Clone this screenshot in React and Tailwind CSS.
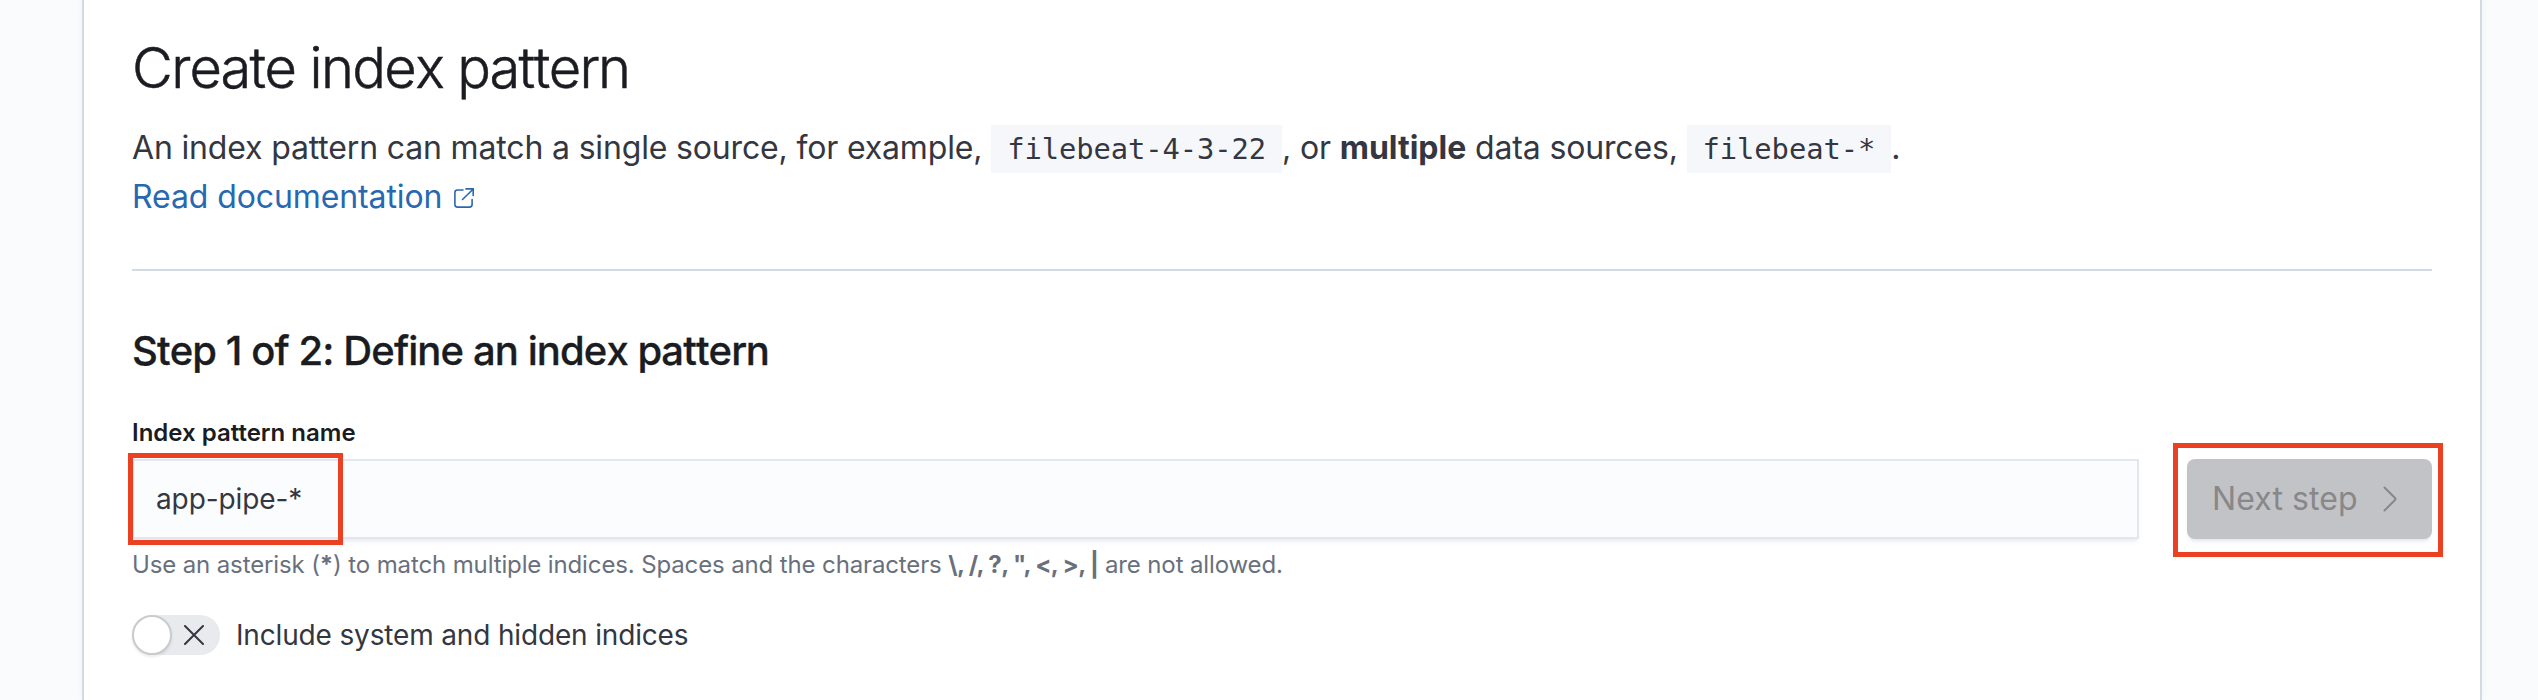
function Code({ children }) {
  return (
    <code className="bg-[#f5f7fa] px-4 pt-[7px] pb-[7px] font-['DejaVu_Sans_Mono',monospace] text-[28.8px] leading-none tracking-[-0.08px]">
      {children}
    </code>
  );
}

function Highlight({ className }) {
  return <div className={`pointer-events-none absolute border-[5px] border-[#ec4023] ${className}`} />;
}

function ExternalIcon() {
  return (
    <svg viewBox="0 0 20 20" className="ml-3 inline-block h-5 w-5 align-baseline" fill="none" stroke="currentColor" strokeWidth="1.6" strokeLinecap="round">
      <path d="M9 2H3.500Q0.900 2 0.900 4.500V16.500Q0.900 19.100 3.500 19.100H15.500Q18.100 19.100 18.100 16.500V11.500" />
      <path d="M12 0.900H19.200V7.500M19 1.200L8.500 11.500" />
    </svg>
  );
}

export default function App() {
  return (
    <div className="flex h-[700px] w-full overflow-hidden bg-[#fafbfd] pl-[82px] font-['Inter','Liberation_Sans',sans-serif] text-[#343741]">
      <main className="h-full w-[2400px] border-x-2 border-[#d3dae6] bg-white px-12 shadow-[0_0_8px_rgba(0,0,0,0.04)]">
        <h1 className="pt-9 text-[56px] leading-[64px] font-light tracking-[-1.64px] text-[#1a1c21] [-webkit-text-stroke:0.5px_#1a1c21] [font-kerning:none]">
          Create index pattern
        </h1>
        <div className="pt-6 text-[32px] leading-[48px] tracking-[-0.005em]">
          <p className="whitespace-nowrap">
            An index pattern can match a single source, for example, <Code>filebeat-4-3-22</Code>, or{" "}
            <strong className="font-bold tracking-[0px]">multiple</strong> data sources, <Code>filebeat-*</Code>.
          </p>
          <a className="block pt-px text-[#2868b0]">
            <span className="tracking-[-0.1px]">Read documentation</span>
            <ExternalIcon />
          </a>
        </div>
        <hr className="mt-12 border-t-2 border-[#d3dae6]" />
        <h2 className="pt-14 text-[40px] leading-[48px] font-medium tracking-[-0.9px] text-[#1a1c21] [-webkit-text-stroke:0.3px_#1a1c21] [font-kerning:none]">
          Step 1 of 2: Define an index pattern
        </h2>
        <div className="flex gap-12 pt-10">
          <div className="flex-1">
            <label className="block text-[24px] leading-9 font-semibold text-[#1a1c21]">Index pattern name</label>
            <div className="relative mt-2 flex h-20 items-center border-2 border-[#e3e6ef] bg-[#fbfcfd] px-[22px] text-[28px] tracking-[-0.1px] shadow-[0_4px_4px_-2px_rgba(152,162,179,0.25)]">
              app-pipe-*
              <Highlight className="top-[-8px] left-[-6px] h-[92px] w-[215px]" />
            </div>
            <p className="pt-2 text-[24px] leading-9 tracking-[-0.13px] text-[#69707d]">
              Use an asterisk (<strong>*</strong>) to match multiple indices. Spaces and the characters{" "}
              <strong className="tracking-[-0.6px]">\, /, ?, ", &lt;, &gt;, |</strong> are not allowed.
            </p>
            <div className="flex items-center gap-4 pt-8">
              <span className="flex h-10 w-[88px] items-center rounded-full bg-[#e9eaee]">
                <span className="h-10 w-10 rounded-full border-2 border-[#c9cbcd] bg-white shadow-[0_2px_3px_rgba(0,0,0,0.08)]" />
                <svg viewBox="0 0 20 20" className="ml-3 h-5 w-5" fill="none" stroke="#343741" strokeWidth="2" strokeLinecap="round">
                  <path d="M1 1L19 19M19 1L1 19" />
                </svg>
              </span>
              <span className="text-[28px] leading-10 tracking-[-0.16px]">Include system and hidden indices</span>
            </div>
          </div>
          <div className="pt-11">
            <button className="relative flex h-20 w-[245px] items-center rounded-lg bg-[#c2c3c6] pl-[25px] text-[32px] text-[#888889] shadow-[0_4px_4px_-2px_rgba(152,162,179,0.3)]">
              <span className="tracking-[0.1px]">Next step</span>
              <svg viewBox="0 0 14 26" className="ml-[25px] h-[26px] w-[14px]" fill="none" stroke="currentColor" strokeWidth="2" strokeLinecap="round" strokeLinejoin="round">
                <path d="M1.500 1.500L12 12Q13 13 12 14L1.500 24.500" />
              </svg>
              <Highlight className="top-[-16px] left-[-14px] h-[114px] w-[270px]" />
            </button>
          </div>
        </div>
      </main>
    </div>
  );
}
